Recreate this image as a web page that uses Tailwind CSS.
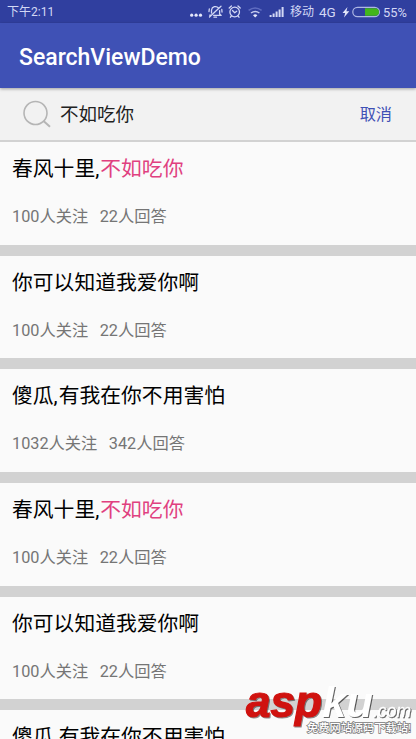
<!DOCTYPE html>
<html lang="zh-CN">
<head>
<meta charset="utf-8">
<title>SearchViewDemo</title>
<script src="https://cdn.jsdelivr.net/npm/@tailwindcss/browser@4"></script>
</head>
<body class="bg-[#fafafa]">
<div class="relative flex h-[739px] w-[416px] flex-col overflow-hidden bg-[#fafafa] font-[Roboto,'Noto_Sans_CJK_SC',sans-serif]">
  <!-- status bar -->
  <header class="flex h-[23px] shrink-0 items-center bg-[#303f9f] pl-[7px] pr-[7px] text-[12px] leading-[23px] text-[#d3d8f5]">
    <span class="mt-[2px] grow text-[12px]">下午2:11</span>
    <svg class="h-[23px] w-[100px] shrink-0" viewBox="188 0 100 23" fill="none" stroke="#d3d8f5">
      <g fill="#e4e7fa" stroke="none"><circle cx="191.700" cy="15.200" r="1.600"/><circle cx="196.100" cy="15.200" r="1.600"/><circle cx="200.500" cy="15.200" r="1.600"/></g>
      <g stroke-width="1.300" stroke-linecap="round" stroke-linejoin="round">
        <path d="M211.500 13V10a4 4 0 0 1 7-2M219.600 10.600v3.400l1.600 1.400h-7.500M209.700 15.200h1M214 17.200h2.500M209.500 17 221 6.200M209.300 9l-.3 2.500M221.800 9.500l.2 2.500"/>
        <circle cx="234.700" cy="12" r="4.800"/>
        <path d="M232.500 10.500l2.200 2.200 2-1.500M229.200 8l2.200-2M240.200 8l-2.200-2M231.400 16l-1 1.200M238 16l1 1.200"/>
      </g>
      <path d="M248.600 10.400q6.500-5 13 0" stroke="#5f6cc0" stroke-width="1.500"/>
      <path d="M251 13q4.200-3.200 8.400 0" stroke="#c5cbee" stroke-width="1.500"/>
      <path d="M253 15.200q2.200-1.700 4.400 0l-2.200 2.200z" fill="#e4e7fa" stroke="none"/>
      <path d="M270.600 15v2M273.600 13.500v3.500M276.600 11.500v5.500M279.600 9.500v7.500M282.600 7v10" stroke-width="2"/>
    </svg>
    <span class="ml-[2px] mt-[2px] w-[25px] text-[12px]">移动</span>
    <span class="ml-[4px] mt-[2px] w-[20px] text-[13.500px]">4G</span>
    <svg class="ml-[3px] h-[23px] w-[39px] shrink-0" viewBox="343 0 39 23">
      <path d="M348.500 7l-5 6h2.700l-1.200 4.500 5.300-6.300h-2.900z" fill="#e4e7fa"/>
      <rect x="353.800" y="7.300" width="26.600" height="9.400" rx="4.700" fill="none" stroke="#aeb7e4" stroke-width="1.200"/>
      <path d="M366 8.200h10.200a3.800 3.800 0 0 1 0 7.600H366z" fill="#42b51c"/>
    </svg>
    <span class="ml-[2px] mt-[2px] w-[26px] text-[12.800px]">55%</span>
  </header>

  <!-- app bar -->
  <div class="relative z-10 flex h-[65px] shrink-0 items-center bg-[#3f51b5] pl-[19px] shadow-[0_1px_3px_rgba(0,0,0,0.35)]">
    <h1 class="mt-[3px] text-[23px] font-medium leading-none text-white">SearchViewDemo</h1>
  </div>

  <!-- search field -->
  <div class="flex h-[54px] shrink-0 items-center border-b-2 border-[#d2d2d2] bg-[#f2f2f2] pl-[22px] pr-[24px]">
    <svg class="h-[28px] w-[30px] shrink-0" viewBox="0 0 30 28" fill="none" stroke="#b5b5b5">
      <circle cx="13.500" cy="13" r="11.500" stroke-width="1.600"/>
      <path d="M21.800 21.200l6.200 5.600" stroke-width="2"/>
    </svg>
    <span class="ml-[8px] mt-[2px] grow text-[18.500px] leading-none text-[#212121]">不如吃你</span>
    <span class="mt-[3px] text-[16.200px] leading-none text-[#3f51b5]">取消</span>
  </div>

  <!-- results -->
  <main class="flex flex-col">
    <article class="h-[113.700px] shrink-0 border-b-[11.500px] border-[#d2d2d2] pl-[12px] pt-[12px]">
      <h2 class="text-[20.800px] leading-[30px] text-black">春风十里<span class="mr-[1px]">,</span><span class="text-[#e0407f]">不如吃你</span></h2>
      <p class="mt-[21px] flex gap-[11.500px] text-[16.250px] leading-[24px] text-[#757575]"><span>100人关注</span><span>22人回答</span></p>
    </article>
    <article class="h-[113.700px] shrink-0 border-b-[11.500px] border-[#d2d2d2] pl-[12px] pt-[12px]">
      <h2 class="text-[20.800px] leading-[30px] text-black">你可以知道我爱你啊</h2>
      <p class="mt-[21px] flex gap-[11.500px] text-[16.250px] leading-[24px] text-[#757575]"><span>100人关注</span><span>22人回答</span></p>
    </article>
    <article class="h-[113.700px] shrink-0 border-b-[11.500px] border-[#d2d2d2] pl-[12px] pt-[12px]">
      <h2 class="text-[20.800px] leading-[30px] text-black">傻瓜<span class="mr-[1px]">,</span>有我在你不用害怕</h2>
      <p class="mt-[21px] flex gap-[11.500px] text-[16.250px] leading-[24px] text-[#757575]"><span>1032人关注</span><span>342人回答</span></p>
    </article>
    <article class="h-[113.700px] shrink-0 border-b-[11.500px] border-[#d2d2d2] pl-[12px] pt-[12px]">
      <h2 class="text-[20.800px] leading-[30px] text-black">春风十里<span class="mr-[1px]">,</span><span class="text-[#e0407f]">不如吃你</span></h2>
      <p class="mt-[21px] flex gap-[11.500px] text-[16.250px] leading-[24px] text-[#757575]"><span>100人关注</span><span>22人回答</span></p>
    </article>
    <article class="h-[113.700px] shrink-0 border-b-[11.500px] border-[#d2d2d2] pl-[12px] pt-[12px]">
      <h2 class="text-[20.800px] leading-[30px] text-black">你可以知道我爱你啊</h2>
      <p class="mt-[21px] flex gap-[11.500px] text-[16.250px] leading-[24px] text-[#757575]"><span>100人关注</span><span>22人回答</span></p>
    </article>
    <article class="h-[113.700px] shrink-0 pl-[12px] pt-[12px]">
      <h2 class="text-[20.800px] leading-[30px] text-black">傻瓜<span class="mr-[1px]">,</span>有我在你不用害怕</h2>
    </article>
  </main>

  <!-- site badge -->
  <svg class="absolute left-[240px] top-[670px] z-20 h-[69px] w-[176px]" viewBox="240 670 176 69" font-family="'Liberation Sans','Noto Sans CJK SC',sans-serif">
    <g font-style="italic">
      <g class="[filter:drop-shadow(1px_1px_0.6px_rgba(0,0,0,0.45))]">
        <text x="246" y="717" font-size="45" font-weight="700" fill="#d0120f" stroke="#d0120f" stroke-width="1.200" textLength="76" lengthAdjust="spacingAndGlyphs">asp</text>
      </g>
      <g class="[filter:drop-shadow(1px_1px_0.6px_rgba(0,0,0,0.6))]">
        <text x="322" y="716.500" font-size="43" font-weight="700" fill="#fff" textLength="51" lengthAdjust="spacingAndGlyphs">ku</text>
        <text x="373" y="717" font-size="18" fill="#fff" stroke="#fff" stroke-width=".3" textLength="38" lengthAdjust="spacingAndGlyphs">.com</text>
      </g>
    </g>
    <text x="307" y="731.500" font-size="11" font-weight="500" fill="#fff" stroke="#777" stroke-width="1.400" paint-order="stroke" textLength="104" lengthAdjust="spacingAndGlyphs">免费网站源码下载站!</text>
  </svg>
</div>
</body>
</html>
